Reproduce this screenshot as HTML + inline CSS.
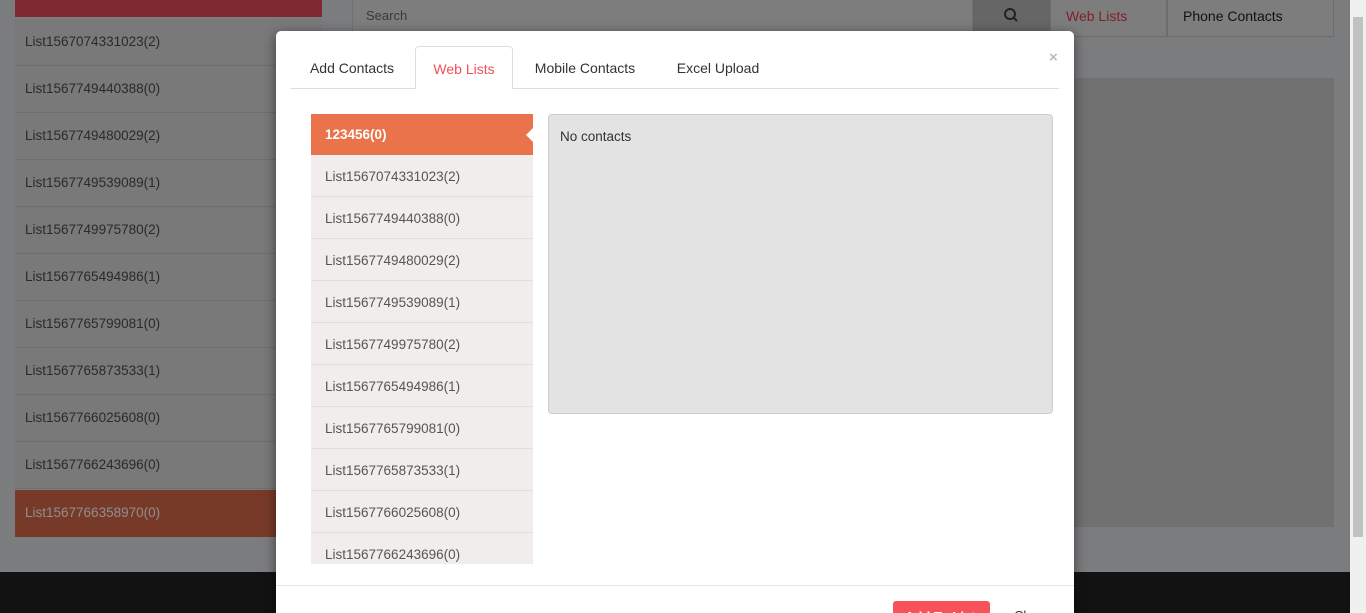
<!DOCTYPE html>
<html style="width:1366px;height:613px;overflow:hidden"><head><meta charset="utf-8"><style>
*{box-sizing:border-box;margin:0;padding:0}
body{width:1366px;height:613px;overflow:hidden;background:#7b7c7e;font-family:"Liberation Sans",sans-serif;position:relative}
.abs{position:absolute}
.li{position:absolute;left:15px;width:307px;height:47px;background:#797979;border-bottom:1px solid #6e6e6e;color:#2a2a2a;font-size:13.5px;padding-left:10px;line-height:46px}
.mi{height:42px;background:#f2eded;border-bottom:1px solid #e2dcdc;color:#555;font-size:13.5px;padding-left:14px;line-height:44px}
.tab{position:absolute;top:46px;height:43px;line-height:44px;font-size:14px;color:#333;text-align:center}
</style></head><body>
<div class="abs" style="left:15px;top:0;width:307px;height:17px;background:#7f2a30"></div>
<div class="li" style="top:19px;line-height:46px">List1567074331023(2)</div>
<div class="li" style="top:66px">List1567749440388(0)</div>
<div class="li" style="top:113px">List1567749480029(2)</div>
<div class="li" style="top:160px">List1567749539089(1)</div>
<div class="li" style="top:207px">List1567749975780(2)</div>
<div class="li" style="top:254px">List1567765494986(1)</div>
<div class="li" style="top:301px">List1567765799081(0)</div>
<div class="li" style="top:348px">List1567765873533(1)</div>
<div class="li" style="top:395px">List1567766025608(0)</div>
<div class="li" style="top:442px">List1567766243696(0)</div>
<div class="li" style="top:490px;background:#783a28;color:#8f8f8f;border:0">List1567766358970(0)</div>
<div class="abs" style="left:352px;top:0;width:621px;height:32px;background:#7d7d7d;border:1px solid #707070;border-top:0;color:#3a3a3a;font-size:13px;padding:8px 13px">Search</div>
<div class="abs" style="left:973px;top:0;width:77px;height:32px;background:#666"><svg width="77" height="32"><circle cx="37" cy="14" r="5" fill="none" stroke="#222" stroke-width="2"/><line x1="41" y1="18" x2="44" y2="21" stroke="#222" stroke-width="2"/></svg></div>
<div class="abs" style="left:1050px;top:0;width:117px;height:37px;background:#7d7d7d;border:1px solid #6c6c6c;border-top:0;color:#7f2228;font-size:14px;line-height:32px;padding-left:15px">Web Lists</div>
<div class="abs" style="left:1167px;top:0;width:167px;height:37px;background:#7d7d7d;border:1px solid #6c6c6c;border-top:0;color:#111;font-size:14px;line-height:32px;padding-left:15px">Phone Contacts</div>
<div class="abs" style="left:352px;top:78px;width:982px;height:449px;background:#717171"></div>
<div class="abs" style="left:0;top:572px;width:1350px;height:41px;background:#121212"></div>
<div class="abs" style="left:1350px;top:0;width:16px;height:613px;background:#f0f0f0"><div style="position:absolute;left:3px;top:17px;width:10px;height:520px;background:#c1c1c1"></div></div>
<div class="abs" style="left:276px;top:31px;width:798px;height:582px;background:#fff;border-radius:5px 5px 0 0;box-shadow:0 3px 12px rgba(0,0,0,.5);overflow:hidden">
<div class="abs" style="left:15px;top:57px;width:768px;height:1px;background:#ddd"></div>
<div class="tab" style="left:17px;top:15px;width:118px">Add Contacts</div>
<div class="tab" style="left:139px;top:15px;width:98px;background:#fff;border:1px solid #ddd;border-bottom-color:#fff;border-radius:4px 4px 0 0;color:#f0505a">Web Lists</div>
<div class="tab" style="left:244px;top:15px;width:130px">Mobile Contacts</div>
<div class="tab" style="left:384px;top:15px;width:116px">Excel Upload</div>
<div class="abs" style="left:773px;top:18px;color:#bbb;font-size:15px;font-weight:bold">×</div>
<div class="abs" style="left:35px;top:83px;width:222px;height:450px;overflow:hidden">
<div class="mi" style="background:#ea734c;color:#fff;font-weight:bold;border:0;height:41px;line-height:41px">123456(0)</div>
<div class="mi">List1567074331023(2)</div><div class="mi">List1567749440388(0)</div><div class="mi">List1567749480029(2)</div><div class="mi">List1567749539089(1)</div><div class="mi">List1567749975780(2)</div><div class="mi">List1567765494986(1)</div><div class="mi">List1567765799081(0)</div><div class="mi">List1567765873533(1)</div><div class="mi">List1567766025608(0)</div><div class="mi">List1567766243696(0)</div>
</div>
<div class="abs" style="left:250px;top:97px;width:0;height:0;border-top:7px solid transparent;border-bottom:7px solid transparent;border-right:7px solid #fff"></div>
<div class="abs" style="left:272px;top:83px;width:505px;height:300px;background:#e3e3e3;border:1px solid #ccc;border-radius:4px;padding:14px 11px;font-size:13.5px;color:#333">No contacts</div>
<div class="abs" style="left:0;top:554px;width:798px;height:1px;background:#e5e5e5"></div>
<div class="abs" style="left:617px;top:570px;width:97px;height:34px;background:#f7525a;border-radius:3px;color:#fff;font-size:13px;font-weight:bold;padding:8px 12px">Add To List</div>
<div class="abs" style="left:738px;top:577px;color:#333;font-size:13px">Close</div>
</div>
</body></html>
